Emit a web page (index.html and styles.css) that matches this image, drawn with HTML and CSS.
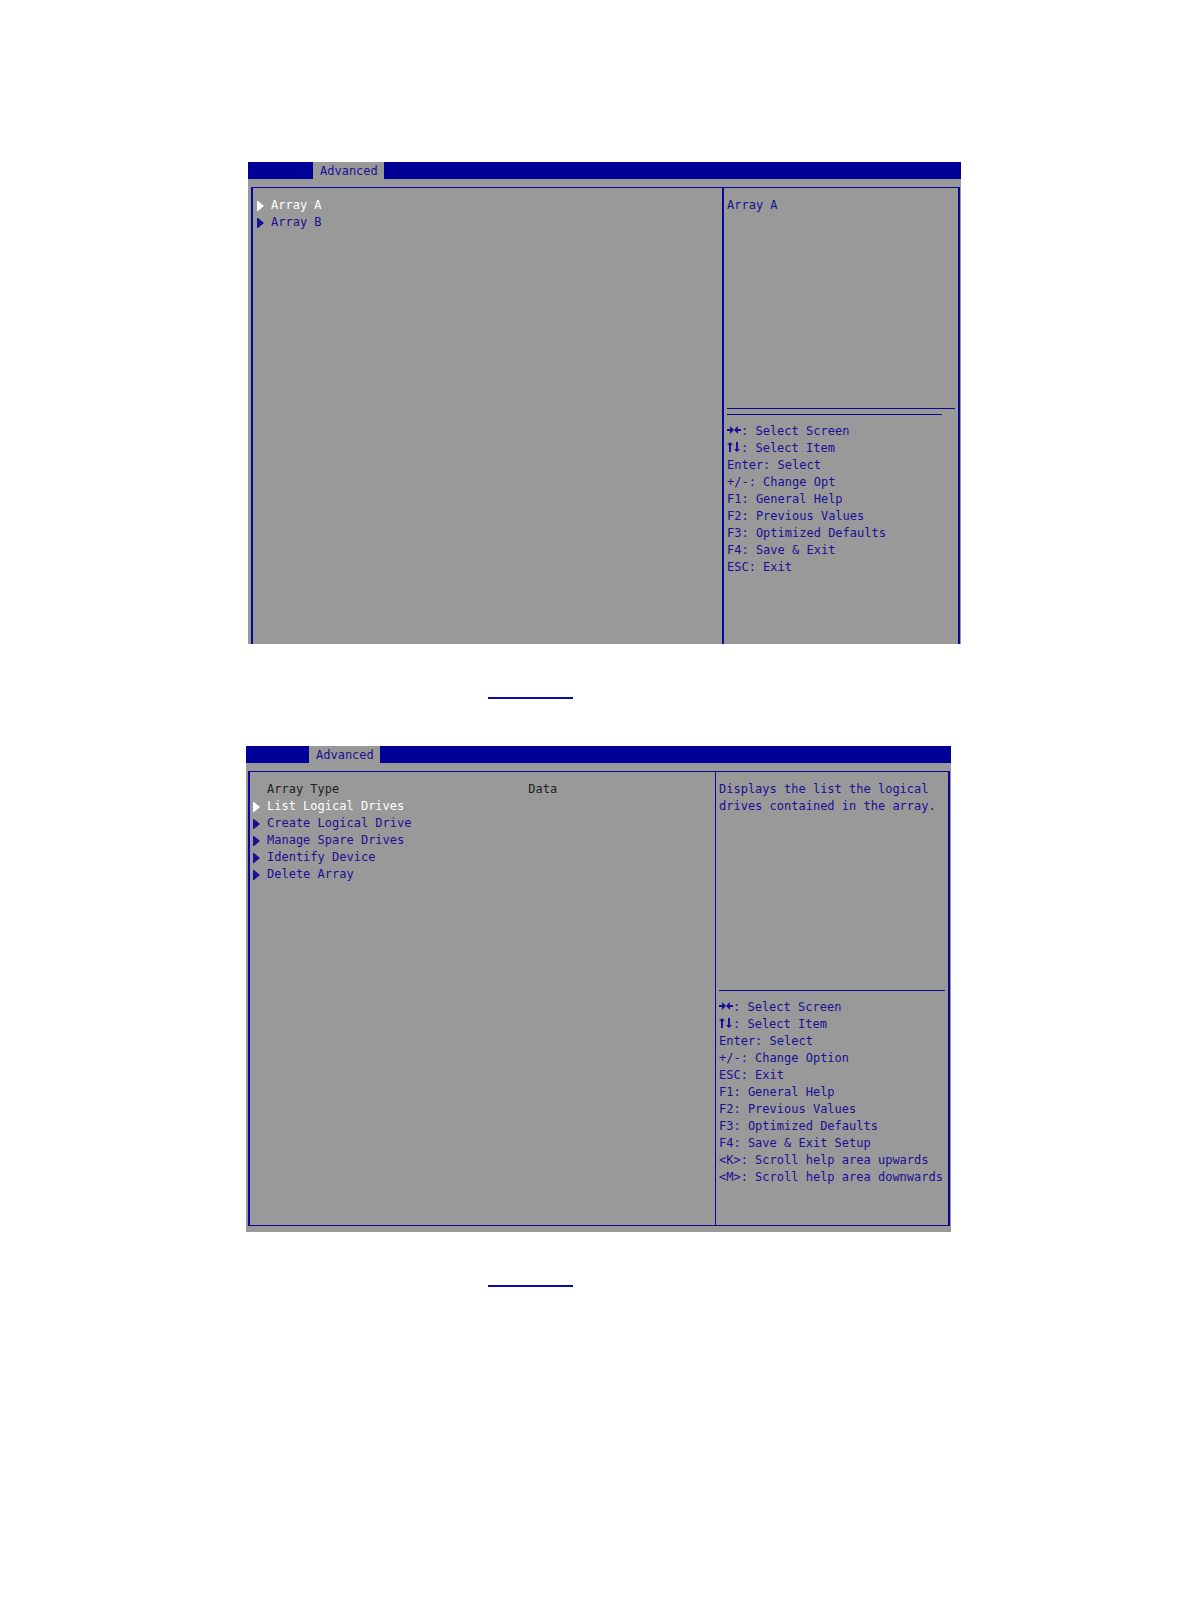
FILE: index.html
```html
<!DOCTYPE html>
<html lang="en">
<head>
<meta charset="utf-8">
<title>Array configuration</title>
<link rel="stylesheet" href="styles.css">
</head>
<body>
<svg class="symbols" aria-hidden="true">
  <symbol id="marker" viewBox="0 0 7 10"><path d="M0 0H1L7 5L1 10H0Z" fill="currentColor"/></symbol>
  <symbol id="sides" viewBox="0 0 14 10"><path d="M0 4H3V1L7 5L3 9V6H0ZM14 4H11V1L7 5L11 9V6H14Z" fill="currentColor"/></symbol>
  <symbol id="updown" viewBox="0 0 14 10"><path d="M2 10V3H0L3 0L6 3H4V10ZM9 0H11V7H13L10 10L7 7H9Z" fill="currentColor"/></symbol>
</svg>
<main class="page">
  <section class="screen screen-arrays" aria-label="Arrays">
    <header class="bar"><button class="tab" type="button">Advanced</button></header>
    <div class="frame">
      <nav class="menu">
        <button class="item selected" type="button"><svg class="marker"><use href="#marker"/></svg>Array A</button>
        <button class="item" type="button"><svg class="marker"><use href="#marker"/></svg>Array B</button>
      </nav>
      <aside class="side">
        <p class="help">Array A</p>
        <hr class="rule"><hr class="rule rule-short">
        <ul class="keys">
          <li><svg class="arrows"><use href="#sides"/></svg>: Select Screen</li>
          <li><svg class="arrows"><use href="#updown"/></svg>: Select Item</li>
          <li>Enter: Select</li>
          <li>+/-: Change Opt</li>
          <li>F1: General Help</li>
          <li>F2: Previous Values</li>
          <li>F3: Optimized Defaults</li>
          <li>F4: Save &amp; Exit</li>
          <li>ESC: Exit</li>
        </ul>
      </aside>
    </div>
  </section>
  <a class="reference" href="#array" aria-label="Array options"></a>
  <section class="screen screen-options" id="array" aria-label="Array options">
    <header class="bar"><button class="tab" type="button">Advanced</button></header>
    <div class="frame">
      <nav class="menu">
        <dl class="info"><dt>Array Type</dt><dd>Data</dd></dl>
        <button class="item selected" type="button"><svg class="marker"><use href="#marker"/></svg>List Logical Drives</button>
        <button class="item" type="button"><svg class="marker"><use href="#marker"/></svg>Create Logical Drive</button>
        <button class="item" type="button"><svg class="marker"><use href="#marker"/></svg>Manage Spare Drives</button>
        <button class="item" type="button"><svg class="marker"><use href="#marker"/></svg>Identify Device</button>
        <button class="item" type="button"><svg class="marker"><use href="#marker"/></svg>Delete Array</button>
      </nav>
      <aside class="side">
        <p class="help">Displays the list the logical drives contained in the array.</p>
        <hr class="rule">
        <ul class="keys">
          <li><svg class="arrows"><use href="#sides"/></svg>: Select Screen</li>
          <li><svg class="arrows"><use href="#updown"/></svg>: Select Item</li>
          <li>Enter: Select</li>
          <li>+/-: Change Option</li>
          <li>ESC: Exit</li>
          <li>F1: General Help</li>
          <li>F2: Previous Values</li>
          <li>F3: Optimized Defaults</li>
          <li>F4: Save &amp; Exit Setup</li>
          <li>&lt;K&gt;: Scroll help area upwards</li>
          <li>&lt;M&gt;: Scroll help area downwards</li>
        </ul>
      </aside>
    </div>
  </section>
  <a class="reference" href="#drives" aria-label="Logical drives"></a>
</main>
</body>
</html>
```
FILE: styles.css
```css
* { box-sizing: border-box; }

body {
  margin: 0;
  background: #fff;
  color: #1a0f96;
  font: 12px/17px "DejaVu Sans Mono", "Liberation Mono", monospace;
}

.symbols { display: none; }

.page {
  display: flow-root;
  padding: 162px 0 329px;
}

.screen { background: #999; }
.screen-arrays { margin: 0 230px 0 248px; }
.screen-options { margin: 0 240px 0 246px; padding-bottom: 6px; }

.bar {
  display: flex;
  height: 17px;
  margin-bottom: 8px;
  padding-left: 65px;
  background: #000099;
}

.screen-options .bar { padding-left: 63px; }

.tab,
.item {
  border: 0;
  padding: 0;
  background: none;
  color: inherit;
  font: inherit;
  text-align: left;
}

.tab {
  padding: 2px 6px 0 7px;
  background: #999;
  line-height: 15px;
}

.frame {
  display: grid;
  grid-template-columns: minmax(0, 1fr) 236px;
  border: solid #0a0896;
  border-width: 1px 2px 0;
}

.screen-arrays .frame { margin: 0 1px 0 3px; }

.screen-options .frame {
  grid-template-columns: minmax(0, 1fr) 233px;
  margin: 0 1px 0 2px;
  border-bottom-width: 1px;
}

.menu {
  display: flex;
  flex-direction: column;
  padding: 9px 0 0 4px;
}

.screen-options .menu { padding-left: 3px; }

.item {
  display: flex;
  align-items: center;
  gap: 7px;
}

.selected { color: #fff; }

.marker {
  width: 7px;
  height: 10px;
}

.info {
  display: grid;
  grid-template-columns: 7fr 5fr;
  margin: 0;
  padding-left: 14px;
  color: #222;
}

.info dd { margin: 0; }

.side {
  padding: 9px 3px 0;
  border-left: 2px solid #0a0896;
}

.screen-options .side { border-left-width: 1px; }

.help {
  min-height: 211px;
  margin: 0;
}

.screen-options .help { min-height: 209px; }

.rule {
  height: 1px;
  margin: 0;
  border: 0;
  background: #0a0896;
}

.rule-short { margin: 5px 13px 0 0; }

.keys {
  margin: 0;
  padding: 8px 0 68px;
  list-style: none;
  white-space: nowrap;
}

.screen-options .keys { padding-bottom: 39px; }

.arrows {
  width: 14px;
  height: 10px;
}

.reference {
  display: block;
  width: 85px;
  height: 20px;
  margin: 35px 0 47px 488px;
  border-bottom: 2px solid #0a0aa5;
}

.screen-options + .reference { margin-bottom: 0; }
```
